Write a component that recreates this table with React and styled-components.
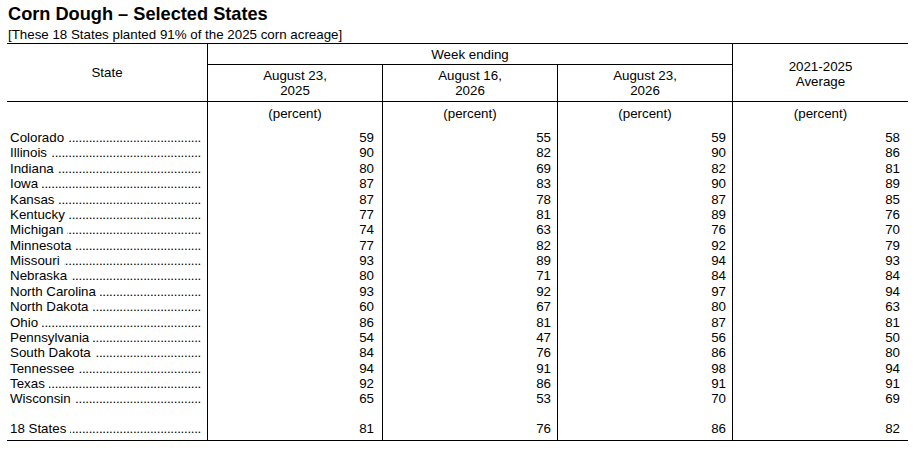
import React from "react";
import styled, { createGlobalStyle } from "styled-components";

const GlobalStyle = createGlobalStyle`
  *, *::before, *::after { box-sizing: border-box; }
  html, body { margin: 0; padding: 0; background: #fff; }
  body {
    font-family: "Liberation Sans", Arial, Helvetica, sans-serif;
    color: #000;
  }
`;

const Page = styled.div`
  padding: 4px 6px 0 7px;
  width: 914px;
`;

const Title = styled.h1`
  margin: 0 0 0 1px;
  font-size: 18.2px;
  line-height: 21px;
  font-weight: bold;
`;

const Subtitle = styled.div`
  margin: 2px 0 1px 1px;
  font-size: 13.33px;
  line-height: 15px;
`;

const Table = styled.table`
  width: 901px;
  table-layout: fixed;
  border-collapse: separate;
  border-spacing: 0;
  border-top: 1px solid #000;
  border-bottom: 1px solid #000;
  font-size: 13.33px;
`;

const HeadCell = styled.th`
  font-weight: normal;
  text-align: center;
  vertical-align: middle;
  line-height: 15px;
  padding: ${(p) => p.$pad || "0"};
  border-left: ${(p) => (p.$first ? "none" : "1px solid #000")};
  border-bottom: 1px solid #000;
`;

const UnitCell = styled.td`
  text-align: center;
  vertical-align: top;
  line-height: 15px;
  padding: 4px 0 9px;
  border-left: ${(p) => (p.$first ? "none" : "1px solid #000")};
`;

const StateCell = styled.td`
  padding: 0 6px ${(p) => p.$padBottom || 0}px 3px;
  line-height: 15.37px;
  height: ${(p) => p.$height || "auto"};
  vertical-align: top;
`;

const NumCell = styled.td`
  text-align: right;
  line-height: 15.37px;
  padding: 0 ${(p) => p.$pr}px ${(p) => p.$padBottom || 0}px 0;
  border-left: 1px solid #000;
  vertical-align: top;
`;

const Label = styled.div`
  display: flex;
  align-items: flex-start;
  white-space: nowrap;
  height: 15.37px;
`;

const Name = styled.span`
  flex: none;
`;

const Leader = styled.span`
  flex: 1;
  min-width: 0;
  height: 15.37px;
  overflow: hidden;
  margin-left: 4px;
  direction: rtl;
  text-align: right;
  letter-spacing: -0.3px;

  &::before {
    content: "............................................................";
  }
`;

const rows = [
  ["Colorado", 59, 55, 59, 58],
  ["Illinois", 90, 82, 90, 86],
  ["Indiana", 80, 69, 82, 81],
  ["Iowa", 87, 83, 90, 89],
  ["Kansas", 87, 78, 87, 85],
  ["Kentucky", 77, 81, 89, 76],
  ["Michigan", 74, 63, 76, 70],
  ["Minnesota", 77, 82, 92, 79],
  ["Missouri", 93, 89, 94, 93],
  ["Nebraska", 80, 71, 84, 84],
  ["North Carolina", 93, 92, 97, 94],
  ["North Dakota", 60, 67, 80, 63],
  ["Ohio", 86, 81, 87, 81],
  ["Pennsylvania", 54, 47, 56, 50],
  ["South Dakota", 84, 76, 86, 80],
  ["Tennessee", 94, 91, 98, 94],
  ["Texas", 92, 86, 91, 91],
  ["Wisconsin", 65, 53, 70, 69],
];

const total = ["18 States", 81, 76, 86, 82];
const pads = [8, 6, 6, 8];

function StateLabel({ name }) {
  return (
    <Label>
      <Name>{name}</Name>
      <Leader aria-hidden="true" />
    </Label>
  );
}

function DataRow({ row, padBottom }) {
  return (
    <tr>
      <StateCell $padBottom={padBottom}>
        <StateLabel name={row[0]} />
      </StateCell>
      {row.slice(1).map((v, i) => (
        <NumCell key={i} $pr={pads[i]} $padBottom={padBottom}>
          {v}
        </NumCell>
      ))}
    </tr>
  );
}

export default function App() {
  return (
    <>
      <GlobalStyle />
      <Page>
        <Title>Corn Dough – Selected States</Title>
        <Subtitle>[These 18 States planted 91% of the 2025 corn acreage]</Subtitle>
        <Table>
          <colgroup>
            <col style={{ width: 200 }} />
            <col style={{ width: 175 }} />
            <col style={{ width: 175 }} />
            <col style={{ width: 175 }} />
            <col style={{ width: 176 }} />
          </colgroup>
          <thead>
            <tr>
              <HeadCell rowSpan={2} $first>
                State
              </HeadCell>
              <HeadCell colSpan={3} $pad="3px 0 2px">
                Week ending
              </HeadCell>
              <HeadCell rowSpan={2} $pad="2px 0 0">
                2021-2025
                <br />
                Average
              </HeadCell>
            </tr>
            <tr>
              <HeadCell $pad="3px 0 3px">
                August 23,
                <br />
                2025
              </HeadCell>
              <HeadCell $pad="3px 0 3px">
                August 16,
                <br />
                2026
              </HeadCell>
              <HeadCell $pad="3px 0 3px">
                August 23,
                <br />
                2026
              </HeadCell>
            </tr>
          </thead>
          <tbody>
            <tr>
              <UnitCell $first />
              <UnitCell>(percent)</UnitCell>
              <UnitCell>(percent)</UnitCell>
              <UnitCell>(percent)</UnitCell>
              <UnitCell>(percent)</UnitCell>
            </tr>
            {rows.map((r) => (
              <DataRow key={r[0]} row={r} />
            ))}
            <tr>
              <StateCell $height="14.6px" />
              <NumCell $pr={0} />
              <NumCell $pr={0} />
              <NumCell $pr={0} />
              <NumCell $pr={0} />
            </tr>
            <DataRow row={total} padBottom={3.5} />
          </tbody>
        </Table>
      </Page>
    </>
  );
}
